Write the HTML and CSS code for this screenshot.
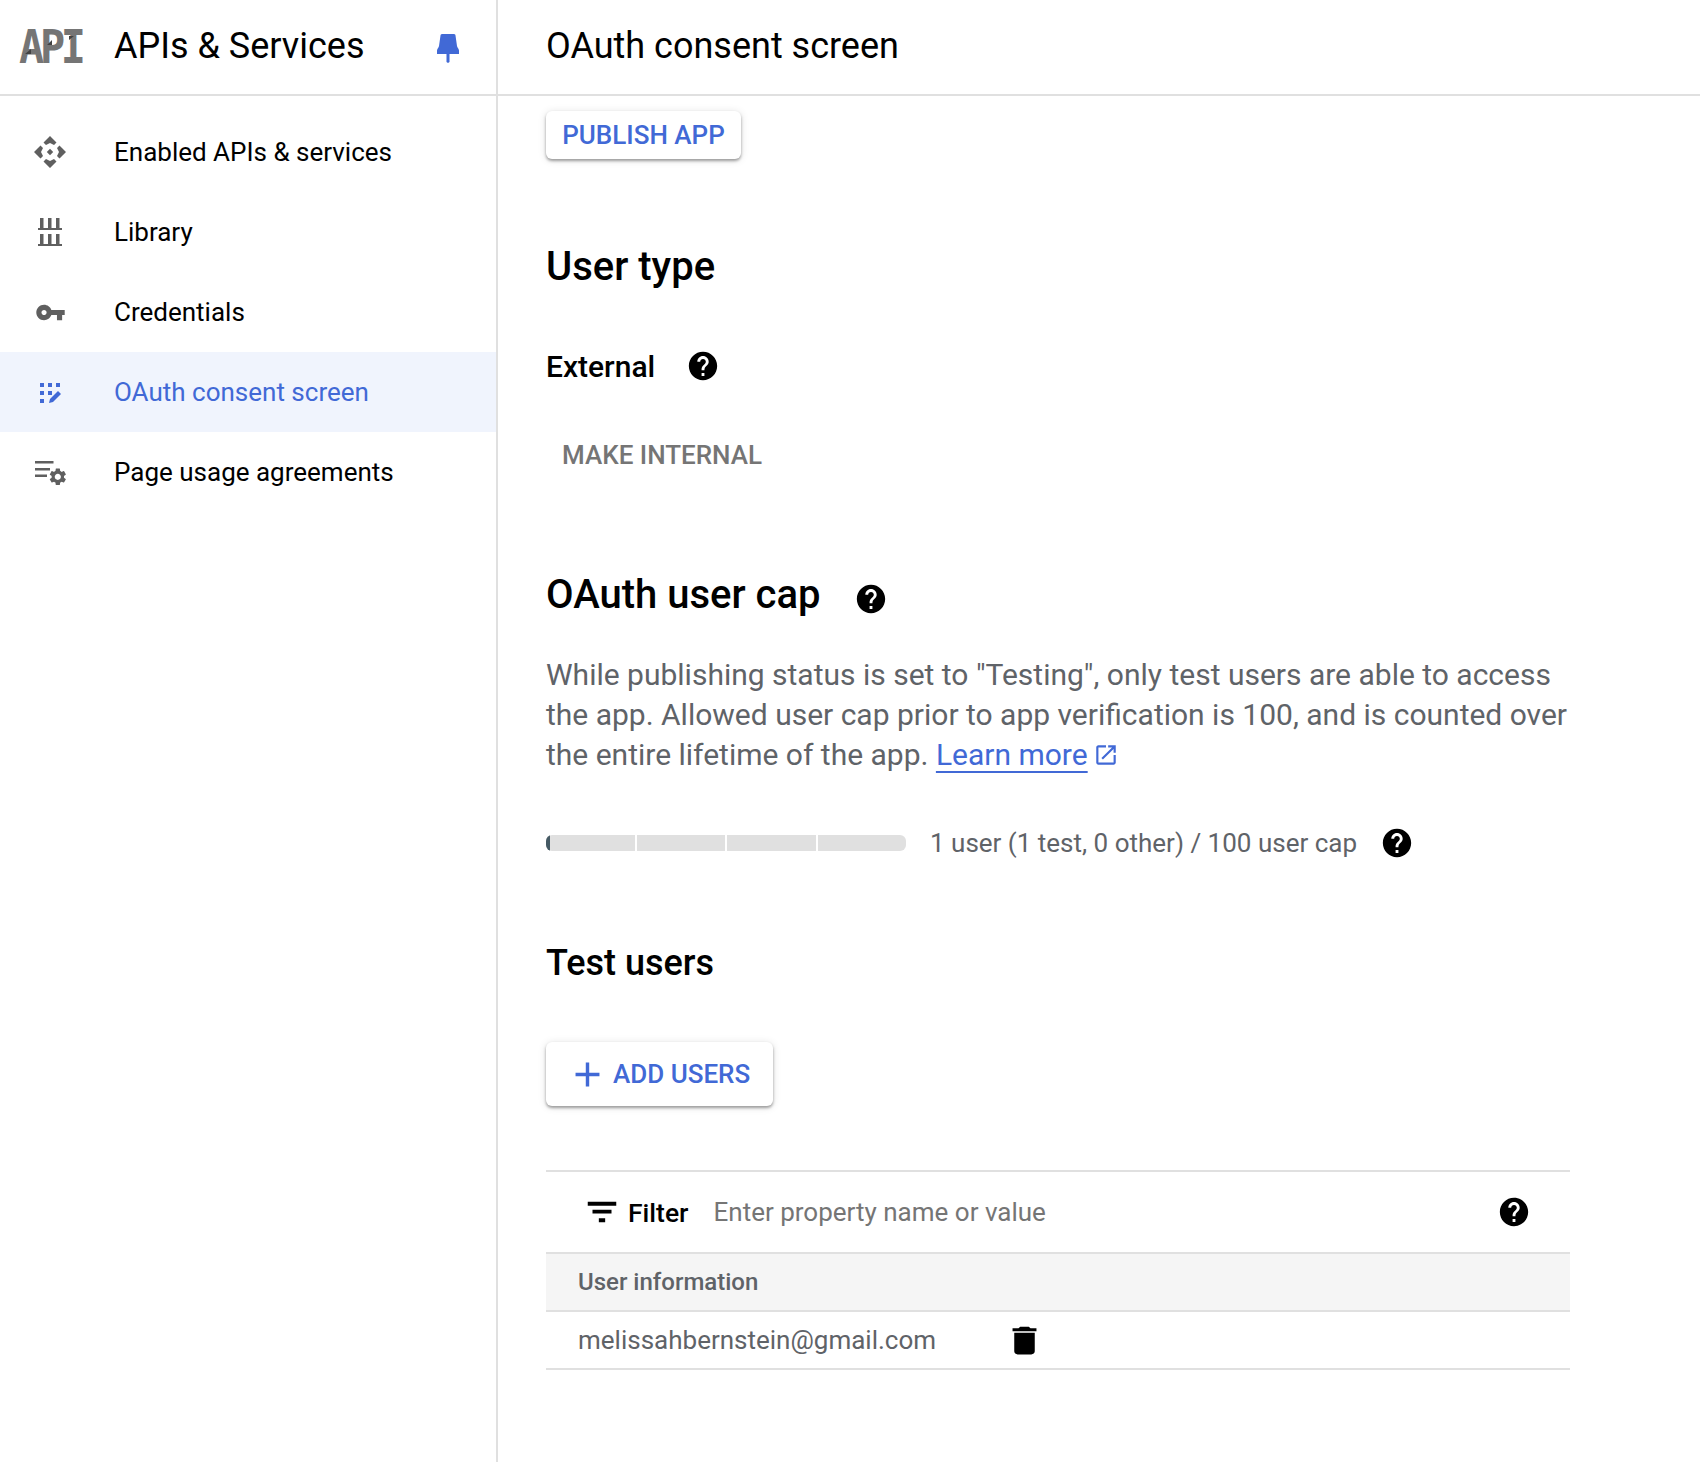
FILE: index.html
```html
<!DOCTYPE html>
<html lang="en">
<head>
<meta charset="utf-8">
<title>OAuth consent screen</title>
<link rel="stylesheet" href="styles.css">
</head>
<body>
<div class="app">
  <aside class="sidebar">
    <header class="side-head">
      <div class="logo">
        <span class="logo-text">API</span>
        <svg class="logo-shade" width="62" height="32" viewBox="0 0 62 32"><path d="M6 23l6-5v5zM28 14l5-5v5zM50 9l5-4H50z" fill="#424242"/></svg>
      </div>
      <span class="side-title">APIs &amp; Services</span>
      <svg class="pin" width="22" height="29" viewBox="0 0 22 29"><path d="M5 0h12c1 0 1.500.8 1.500 1.500L20 12c.3 1.500 2 3 2 4.500V20H12.500v8l-1.500 1-1.500-1v-8H0v-3.500C0 15 1.700 13.500 2 12L3.500 1.500C3.500.8 4 0 5 0z"/></svg>
    </header>
    <nav class="nav">
      <a class="nav-item">
        <span class="nav-icon"><svg width="32" height="32" viewBox="0 0 32 32"><path d="M16 0l6.500 6.500-2.500 2.500-4-2-4 2-2.500-2.500z"/><path d="M16 32l6.500-6.500-2.500-2.500-4 2-4-2-2.500 2.500zM0 16l6.500-6.500 2.500 2.500-2 4 2 4-2.500 2.500zM32 16l-6.500-6.500-2.500 2.500 2 4-2 4 2.500 2.500zM16 12.800l3.200 3.200-3.200 3.200-3.200-3.200z"/></svg></span>
        <span class="nav-label">Enabled APIs &amp; services</span>
      </a>
      <a class="nav-item">
        <span class="nav-icon"><svg width="24" height="28" viewBox="0 0 24 28"><path d="M2 0h3.500v10H2zM10 0h3.500v10H10zM18 0h3.500v10H18zM0 10h24v2H0zM2 16h3.500v10H2zM10 16h3.500v10H10zM18 16h3.500v10H18zM0 26h24v2H0z"/></svg></span>
        <span class="nav-label">Library</span>
      </a>
      <a class="nav-item">
        <span class="nav-icon"><svg width="31" height="31" viewBox="0 0 24 24"><path d="M12.650 10C11.830 7.670 9.610 6 7 6c-3.310 0-6 2.690-6 6s2.690 6 6 6c2.610 0 4.830-1.670 5.650-4H17v4h4v-4h2v-4H12.650zM7 14c-1.100 0-2-.9-2-2s.9-2 2-2 2 .9 2 2-.9 2-2 2z"/></svg></span>
        <span class="nav-label">Credentials</span>
      </a>
      <a class="nav-item is-active">
        <span class="nav-icon"><svg class="icon-nudge" width="22" height="22" viewBox="0 0 22 22"><path d="M0 0h4v4H0zM8 0h4v4H8zM16 0h4v4h-4zM0 8h4v4H0zM8 8h4v4H8zM0 16h4v4H0z"/><path d="M9 20l1-4 8-8 3 3-8 8z"/></svg></span>
        <span class="nav-label">OAuth consent screen</span>
      </a>
      <a class="nav-item">
        <span class="nav-icon"><svg class="icon-nudge" width="32" height="26" viewBox="0 0 32 26"><path d="M0 0h18.500v2.500H0zM0 7h15v2.500H0zM0 13.500h12V16H0z"/><g transform="translate(12.500 5.500) scale(.86)"><path d="M19.140 12.940c.04-.3.06-.61.06-.94 0-.32-.02-.64-.07-.94l2.030-1.580c.18-.14.23-.41.12-.61l-1.920-3.320c-.12-.22-.37-.29-.59-.22l-2.390.96c-.5-.38-1.030-.7-1.620-.94l-.36-2.540c-.04-.24-.24-.41-.48-.41h-3.840c-.24 0-.43.17-.47.41l-.36 2.540c-.59.24-1.130.57-1.620.94l-2.390-.96c-.22-.08-.47 0-.59.22L2.740 8.870c-.12.21-.08.47.12.61l2.030 1.580c-.05.3-.09.63-.09.94s.02.64.07.94l-2.030 1.580c-.18.14-.23.41-.12.61l1.920 3.320c.12.22.37.29.59.22l2.390-.96c.5.38 1.030.7 1.620.94l.36 2.540c.05.24.24.41.48.41h3.840c.24 0 .44-.17.47-.41l.36-2.540c.59-.24 1.130-.56 1.620-.94l2.390.96c.22.08.47 0 .59-.22l1.920-3.320c.12-.22.07-.47-.12-.61l-2.010-1.580zM12 15.600c-1.980 0-3.600-1.620-3.600-3.600s1.620-3.600 3.600-3.600 3.600 1.620 3.600 3.600-1.620 3.600-3.600 3.600z"/></g></svg></span>
        <span class="nav-label">Page usage agreements</span>
      </a>
    </nav>
  </aside>
  <main class="main">
    <header class="main-head"><h1 class="main-title">OAuth consent screen</h1></header>
    <div class="content">
      <button class="btn btn-publish">PUBLISH APP</button>

      <h2 class="h-user-type">User type</h2>
      <div class="external">
        <span class="external-label">External</span>
        <svg class="help" width="34" height="34" viewBox="0 0 24 24"><path d="M12 2C6.480 2 2 6.480 2 12s4.480 10 10 10 10-4.480 10-10S17.520 2 12 2zm1 17h-2v-2h2v2zm2.070-7.750l-.9.920C13.450 12.900 13 13.500 13 15h-2v-.5c0-1.100.45-2.100 1.170-2.830l1.240-1.260c.37-.36.59-.86.59-1.410 0-1.100-.9-2-2-2s-2 .9-2 2H8c0-2.210 1.790-4 4-4s4 1.790 4 4c0 .88-.36 1.680-.93 2.250z"/></svg>
      </div>
      <div class="make-internal">MAKE INTERNAL</div>

      <div class="cap-head">
        <h2 class="cap-title">OAuth user cap</h2>
        <svg class="help cap-help" width="34" height="34" viewBox="0 0 24 24"><path d="M12 2C6.480 2 2 6.480 2 12s4.480 10 10 10 10-4.480 10-10S17.520 2 12 2zm1 17h-2v-2h2v2zm2.070-7.750l-.9.920C13.450 12.900 13 13.500 13 15h-2v-.5c0-1.100.45-2.100 1.170-2.830l1.240-1.260c.37-.36.59-.86.59-1.410 0-1.100-.9-2-2-2s-2 .9-2 2H8c0-2.210 1.790-4 4-4s4 1.790 4 4c0 .88-.36 1.680-.93 2.250z"/></svg>
      </div>
      <p class="cap-text">While publishing status is set to "Testing", only test users are able to access the app. Allowed user cap prior to app verification is 100, and is counted over the entire lifetime of the app. <a class="learn">Learn more</a><svg class="ext" width="26" height="26" viewBox="0 0 24 24"><path d="M19 19H5V5h7V3H5c-1.110 0-2 .9-2 2v14c0 1.100.89 2 2 2h14c1.100 0 2-.9 2-2v-7h-2v7zM14 3v2h3.590l-9.830 9.830 1.410 1.410L19 6.410V10h2V3h-7z"/></svg></p>

      <div class="usage">
        <div class="bar">
          <span class="bar-fill"></span>
          <span class="bar-seg"></span><span class="bar-seg"></span><span class="bar-seg"></span><span class="bar-seg"></span>
        </div>
        <span class="usage-text">1 user (1 test, 0 other) / 100 user cap</span>
        <svg class="help" width="34" height="34" viewBox="0 0 24 24"><path d="M12 2C6.480 2 2 6.480 2 12s4.480 10 10 10 10-4.480 10-10S17.520 2 12 2zm1 17h-2v-2h2v2zm2.070-7.750l-.9.920C13.450 12.900 13 13.500 13 15h-2v-.5c0-1.100.45-2.100 1.170-2.830l1.240-1.260c.37-.36.59-.86.59-1.410 0-1.100-.9-2-2-2s-2 .9-2 2H8c0-2.210 1.790-4 4-4s4 1.790 4 4c0 .88-.36 1.680-.93 2.250z"/></svg>
      </div>

      <h3 class="test-title">Test users</h3>
      <button class="btn btn-add">
        <svg width="41" height="41" viewBox="0 0 24 24"><path d="M19 13h-6v6h-2v-6H5v-2h6V5h2v6h6v2z"/></svg>
        <span>ADD USERS</span>
      </button>

      <div class="table">
        <div class="filter">
          <svg width="38" height="38" viewBox="0 0 24 24"><path d="M10 18.500h4v-2.500h-4v2.500zM3 5.500v2.500h18V5.500H3zm3 7.500h12v-2.500H6V13z"/></svg>
          <span class="filter-label">Filter</span>
          <span class="filter-input">Enter property name or value</span>
          <svg class="filter-help" width="34" height="34" viewBox="0 0 24 24"><path d="M12 2C6.480 2 2 6.480 2 12s4.480 10 10 10 10-4.480 10-10S17.520 2 12 2zm1 17h-2v-2h2v2zm2.070-7.750l-.9.920C13.450 12.900 13 13.500 13 15h-2v-.5c0-1.100.45-2.100 1.170-2.830l1.240-1.260c.37-.36.59-.86.59-1.410 0-1.100-.9-2-2-2s-2 .9-2 2H8c0-2.210 1.790-4 4-4s4 1.790 4 4c0 .88-.36 1.680-.93 2.250z"/></svg>
        </div>
        <div class="thead">User information</div>
        <div class="trow">
          <span class="email">melissahbernstein@gmail.com</span>
          <svg class="trash" width="41" height="37" viewBox="0 0 24 24" preserveAspectRatio="none"><path d="M6 19c0 1.100.9 2 2 2h8c1.100 0 2-.9 2-2V7H6v12zM19 4h-3.500l-1-1h-5l-1 1H5v2h14V4z"/></svg>
        </div>
      </div>
    </div>
  </main>
</div>
</body>
</html>
```
FILE: styles.css
```css
* { box-sizing: border-box; }
html, body { margin: 0; padding: 0; background: #fff; }
body { font-family: Roboto, "Liberation Sans", sans-serif; color: #000; height: 1462px; overflow: hidden; }
h1, h2, h3, p { margin: 0; font-weight: 400; }

.app { display: flex; height: 1462px; }

.sidebar { width: 498px; flex: none; border-right: 2px solid #e0e0e0; }
.side-head { height: 96px; border-bottom: 2px solid #e0e0e0; display: flex; align-items: center; padding-left: 19px; padding-right: 37px; }
.logo { position: relative; width: 62px; height: 32px; margin-right: 33px; flex: none; }
.logo-text { display: block; width: 62px; font-family: "DejaVu Sans Mono", monospace; font-weight: 700; font-size: 44px; line-height: 32px; color: #757575; transform: scale(.95, 1.05); transform-origin: left center; white-space: nowrap; letter-spacing: -4.500px; }
.logo-shade { position: absolute; left: 0; top: 0; }
.side-title { font-size: 36px; line-height: 44px; flex: 1; white-space: nowrap; padding-bottom: 2px; }
.pin { fill: #4169d6; flex: none; margin-top: 2px; }

.nav { padding-top: 16px; }
.nav-item { display: flex; align-items: center; height: 80px; font-size: 26px; color: #000; }
.nav-icon { width: 100px; display: flex; justify-content: center; flex: none; fill: #5f5f5f; margin-right: 14px; }
.icon-nudge { margin-left: 2px; margin-top: 4px; }
.nav-item.is-active { background: #f0f4fd; color: #4169d6; }
.nav-item.is-active .nav-icon { fill: #4169d6; }

.main { flex: 1; min-width: 0; }
.main-head { height: 96px; border-bottom: 2px solid #e0e0e0; display: flex; align-items: center; padding-left: 48px; padding-bottom: 2px; }
.main-title { font-size: 36px; line-height: 44px; white-space: nowrap; }
.content { padding: 15px 130px 0 48px; }

.btn { display: flex; align-items: center; border: 0; background: #fff; border-radius: 6px; box-shadow: 0 2px 3px rgba(0,0,0,.35), 0 1px 8px rgba(0,0,0,.12); color: #4169d6; font-family: inherit; font-weight: 500; font-size: 26px; padding: 0; }
.btn-publish { width: 195px; height: 48px; justify-content: center; }

.h-user-type { font-size: 40px; line-height: 44px; font-weight: 500; margin-top: 86px; }
.external { height: 40px; margin-top: 57px; display: flex; align-items: center; }
.external-label { font-size: 30px; font-weight: 500; margin-right: 31px; }
.help { flex: none; }
.make-internal { height: 40px; line-height: 40px; margin-top: 49px; padding-left: 16px; color: #757575; font-size: 26px; font-weight: 500; }

.cap-head { margin-top: 98px; height: 44px; display: flex; align-items: center; }
.cap-title { font-size: 40px; line-height: 44px; font-weight: 500; margin-right: 34px; }
.cap-help { margin-top: 8px; }
.cap-text { margin-top: 38px; font-size: 30px; line-height: 40px; color: #5f6368; }
.learn { color: #4169d6; text-decoration: underline; text-decoration-thickness: 2px; text-underline-offset: 6px; }
.ext { fill: #4169d6; vertical-align: -3px; margin-left: 5px; }

.usage { margin-top: 48px; height: 40px; display: flex; align-items: center; }
.bar { position: relative; width: 360px; height: 16px; display: flex; gap: 2px; border-radius: 6px; overflow: hidden; margin-right: 24px; }
.bar-seg { flex: 1; background: #e0e0e0; }
.bar-fill { position: absolute; left: 0; top: 0; bottom: 0; width: 4px; background: #455a64; }
.usage-text { font-size: 26px; color: #5f6368; margin-right: 23px; white-space: nowrap; }

.test-title { margin-top: 80px; font-size: 36px; line-height: 40px; font-weight: 500; }
.btn-add { margin-top: 59px; width: 227px; height: 64px; padding-left: 21px; fill: #4169d6; gap: 5px; }

.table { margin-top: 64px; }
.filter { height: 82px; border-top: 2px solid #e0e0e0; display: flex; align-items: center; padding-left: 37px; padding-right: 39px; }
.filter-label { margin-left: 7px; font-size: 26.500px; font-weight: 500; }
.filter-input { margin-left: 25px; font-size: 26px; color: #757575; flex: 1; }
.thead { height: 60px; border-top: 2px solid #e0e0e0; border-bottom: 2px solid #e0e0e0; background: #f5f5f5; display: flex; align-items: center; padding-left: 32px; color: #5f6368; font-size: 24px; font-weight: 500; }
.trow { height: 58px; border-bottom: 2px solid #e0e0e0; display: flex; align-items: center; padding-left: 32px; }
.email { width: 426px; font-size: 26px; color: #5f6368; }
.trash { flex: none; }
```
